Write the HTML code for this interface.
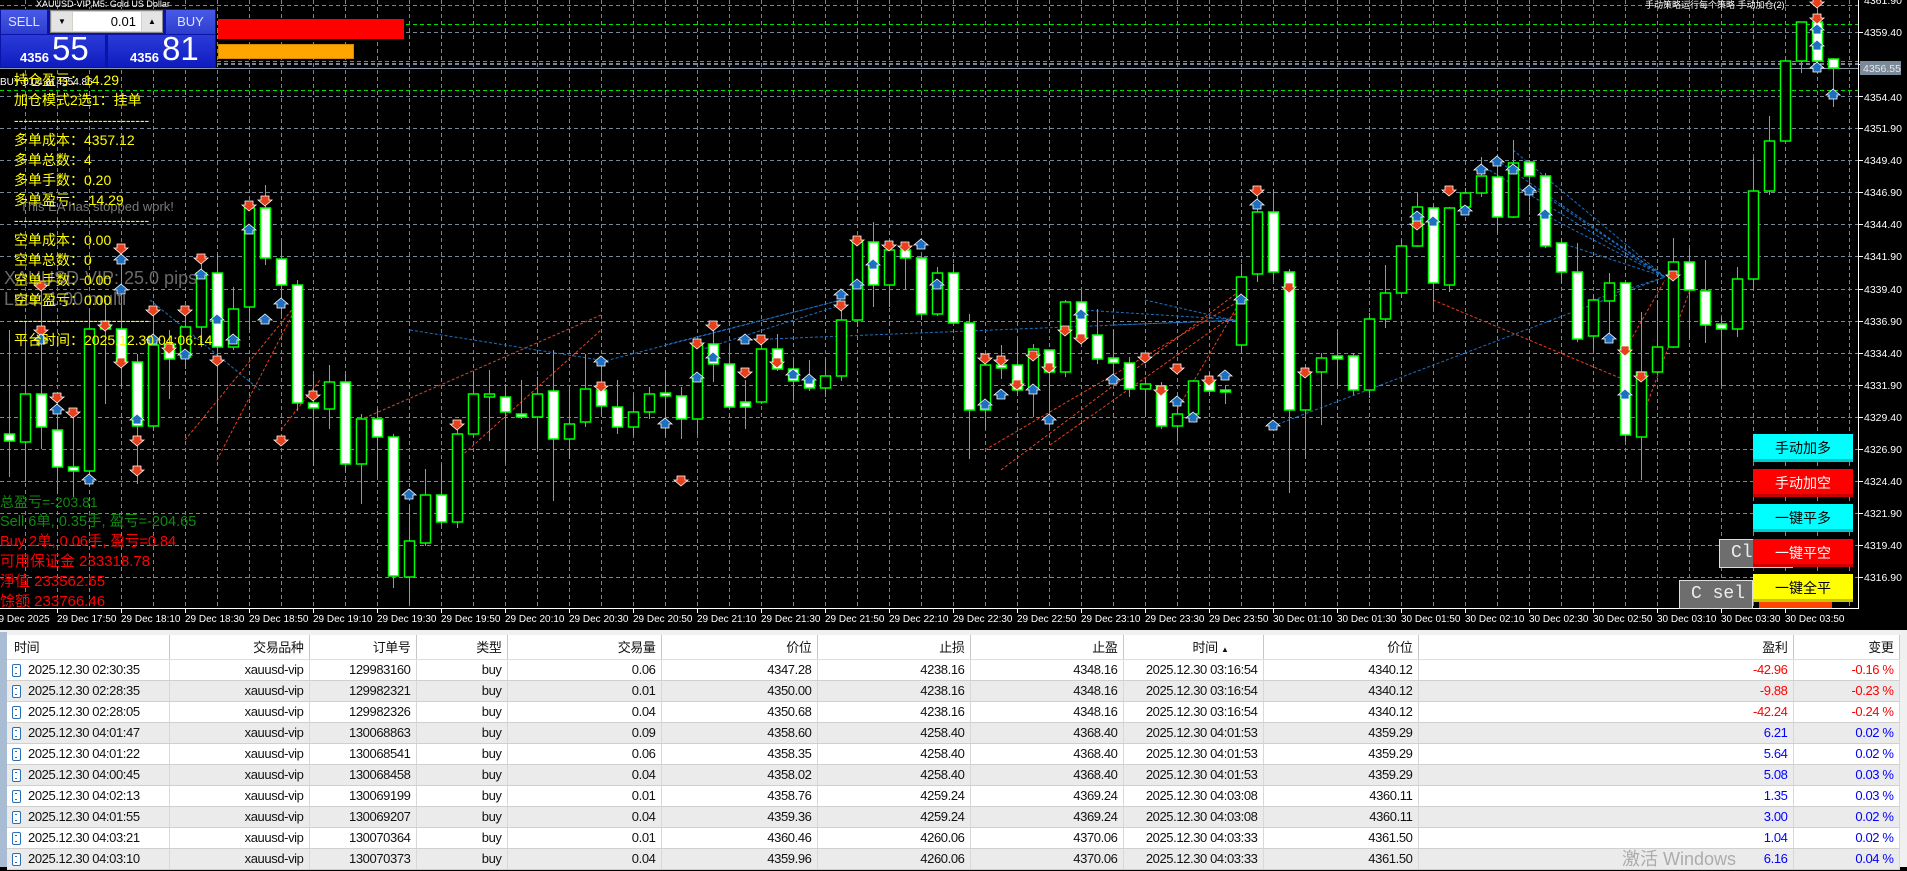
<!DOCTYPE html>
<html><head><meta charset="utf-8"><style>
*{margin:0;padding:0;box-sizing:border-box}
body{width:1907px;height:867px;overflow:hidden;background:#000;position:relative;font-family:"Liberation Sans","Noto Sans CJK SC",sans-serif}
.a{position:absolute;white-space:nowrap}
.y{color:#ff0;font-size:14px;left:14px;line-height:16px}
.btn{position:absolute;left:1753px;width:100px;height:28px;font-size:14px;text-align:center;line-height:28px;font-family:"Liberation Sans","Noto Sans CJK SC",sans-serif}
table{position:absolute;left:7px;top:635px;border-collapse:collapse;table-layout:fixed;width:1892px;font-size:13px;letter-spacing:-0.4px;color:#111}
th{height:24px;font-weight:normal;text-align:right;padding:0 5px;border-right:1px solid #c8c8c8;border-bottom:1px solid #ddd;background:#fff}
td{height:21px;text-align:right;padding:0 5px;border-right:1px solid #d8d8d8;border-bottom:1px solid #d0d0d0;white-space:nowrap;overflow:hidden;background:#fff}
tr.g td{background:#ebebeb}
td:first-child,th:first-child{text-align:left}
.ic{display:inline-block;width:9px;height:13px;border:1.5px solid #2a6fb5;border-radius:2px;vertical-align:-3px;margin:0 7px 0 0;position:relative;background:#fff}
.ic:after{content:"";position:absolute;left:2px;top:2px;width:2px;height:5px;border-top:1px solid #2a6fb5;border-bottom:1px solid #2a6fb5}
.r{color:#f00}.b{color:#00f}
</style></head><body>
<svg class="a" style="left:0;top:0" width="1907" height="632" xmlns="http://www.w3.org/2000/svg">
<rect width="1907" height="632" fill="#000"/>
<g stroke="#778899" stroke-width="1" stroke-dasharray="4,3">
<path d="M25.5 0V608M57.5 0V608M89.5 0V608M121.5 0V608M153.5 0V608M185.5 0V608M217.5 0V608M249.5 0V608M281.5 0V608M313.5 0V608M345.5 0V608M377.5 0V608M409.5 0V608M441.5 0V608M473.5 0V608M505.5 0V608M537.5 0V608M569.5 0V608M601.5 0V608M633.5 0V608M665.5 0V608M697.5 0V608M729.5 0V608M761.5 0V608M793.5 0V608M825.5 0V608M857.5 0V608M889.5 0V608M921.5 0V608M953.5 0V608M985.5 0V608M1017.5 0V608M1049.5 0V608M1081.5 0V608M1113.5 0V608M1145.5 0V608M1177.5 0V608M1209.5 0V608M1241.5 0V608M1273.5 0V608M1305.5 0V608M1337.5 0V608M1369.5 0V608M1401.5 0V608M1433.5 0V608M1465.5 0V608M1497.5 0V608M1529.5 0V608M1561.5 0V608M1593.5 0V608M1625.5 0V608M1657.5 0V608M1689.5 0V608M1721.5 0V608M1753.5 0V608M1785.5 0V608M1817.5 0V608M1849.5 0V608"/>
<path d="M0 32.5H1858M0 64.5H1858M0 96.5H1858M0 128.5H1858M0 160.5H1858M0 192.5H1858M0 224.5H1858M0 256.5H1858M0 289.5H1858M0 321.5H1858M0 353.5H1858M0 385.5H1858M0 417.5H1858M0 449.5H1858M0 481.5H1858M0 513.5H1858M0 545.5H1858M0 577.5H1858"/>
</g>
<g stroke="#00e000" stroke-width="1" stroke-dasharray="4,3">
<path d="M0 5.5H1858M0 24.5H1858M0 61.5H1858M0 63.5H1858M0 90.5H1858"/>
</g>
<path d="M0 68.5H1858" stroke="#8899aa" stroke-width="1"/>
<g fill="none" stroke-width="1" stroke-dasharray="3,2">
<g stroke="#1e6fc0">
<path d="M1481 165L1665 277M1497 160L1665 277M1513 150L1665 277M1529 185L1665 277M1545 215L1665 277M1561 243L1665 277M1593 300L1665 277M1273 426L1665 277"/>
<path d="M665 345L841 300M700 350L841 305M601 362L841 300M745 340L1241 320M1081 310L1241 320M1113 325L1241 320M1145 300L1241 322M410 330L600 360M150 300L260 390"/>
</g>
<g stroke="#e8401c">
<path d="M985 450L1241 300M1001 470L1241 290M1050 445L1241 310M1177 410L1241 300M360 420L601 315M457 460L601 330M281 430L320 380M185 440L300 300M217 460L300 300M1433 300L1625 380M1625 350L1665 280M1641 420L1690 290"/>
</g>
</g>
<g stroke="#00ff00" stroke-width="1">
<path d="M9.5 330V477M25.5 322V482M41.5 287V449M57.5 396V494M73.5 412V497M89.5 310V486M105.5 300V404M121.5 247V387M137.5 354V484M153.5 310V431M169.5 330V399M185.5 307V369M201.5 257V347M217.5 254V421M233.5 287V350M249.5 203V330M265.5 185V265M281.5 240V315M297.5 280V411M313.5 374V466M329.5 365V429M345.5 374V471M361.5 414V504M377.5 409V477M393.5 434V588M409.5 506V604M425.5 469V546M441.5 464V526M457.5 421V528M473.5 372V437M489.5 370V441M505.5 384V462M521.5 380V419M537.5 377V451M553.5 350V501M569.5 387V459M585.5 354V427M601.5 367V417M617.5 380V434M633.5 396V436M649.5 387V419M665.5 370V437M681.5 387V439M697.5 340V434M713.5 327V382M729.5 347V409M745.5 380V429M761.5 339V404M777.5 334V371M793.5 360V399M809.5 360V391M825.5 359V397M841.5 304V381M857.5 237V327M873.5 222V307M889.5 244V307M905.5 244V290M921.5 256V320M937.5 267V316M953.5 264V324M969.5 314V459M985.5 364V429M1001.5 345V379M1017.5 339V396M1033.5 344V417M1049.5 350V427M1065.5 300V377M1081.5 290V339M1097.5 309V364M1113.5 330V381M1129.5 357V397M1145.5 380V417M1161.5 382V429M1177.5 401V441M1193.5 380V416M1209.5 372V394M1225.5 386V404M1241.5 264V354M1257.5 187V282M1273.5 190V280M1289.5 269V493M1305.5 365V458M1321.5 353V425M1337.5 332V387M1353.5 353V395M1369.5 313V398M1385.5 265V328M1401.5 240V298M1417.5 192V247M1433.5 205V308M1449.5 207V292M1465.5 188V213M1481.5 157V197M1497.5 155V233M1513.5 140V218M1529.5 160V215M1545.5 173V248M1561.5 238V283M1577.5 243V342M1593.5 295V350M1609.5 273V339M1625.5 282V442M1641.5 312V480M1657.5 300V373M1673.5 238V348M1689.5 248V338M1705.5 260V343M1721.5 317V385M1737.5 267V337M1753.5 158V290M1769.5 116V195M1785.5 60V142M1801.5 22V73M1817.5 2V65M1833.5 58V107"/>
</g>
<g stroke="#00ff00" stroke-width="1.5">
<g fill="#fff">
<rect x="4.5" y="434" width="10" height="7"/><rect x="36.5" y="394" width="10" height="33"/><rect x="52.5" y="430" width="10" height="37"/><rect x="68.5" y="467" width="10" height="4"/><rect x="100.5" y="325" width="10" height="4"/><rect x="116.5" y="329" width="10" height="33"/><rect x="132.5" y="362" width="10" height="64"/><rect x="164.5" y="344" width="10" height="15"/><rect x="212.5" y="273" width="10" height="74"/><rect x="260.5" y="208" width="10" height="50"/><rect x="276.5" y="259" width="10" height="26"/><rect x="292.5" y="285" width="10" height="118"/><rect x="308.5" y="403" width="10" height="5"/><rect x="340.5" y="382" width="10" height="82"/><rect x="372.5" y="419" width="10" height="18"/><rect x="388.5" y="437" width="10" height="139"/><rect x="436.5" y="495" width="10" height="27"/><rect x="500.5" y="397" width="10" height="15"/><rect x="516.5" y="414" width="10" height="3"/><rect x="548.5" y="391" width="10" height="48"/><rect x="596.5" y="390" width="10" height="16"/><rect x="612.5" y="407" width="10" height="20"/><rect x="660.5" y="393" width="10" height="3"/><rect x="676.5" y="396" width="10" height="23"/><rect x="708.5" y="344" width="10" height="20"/><rect x="724.5" y="364" width="10" height="43"/><rect x="740.5" y="402" width="10" height="5"/><rect x="772.5" y="349" width="10" height="20"/><rect x="788.5" y="369" width="10" height="12"/><rect x="804.5" y="380" width="10" height="8"/><rect x="868.5" y="242" width="10" height="43"/><rect x="900.5" y="250" width="10" height="8"/><rect x="916.5" y="258" width="10" height="56"/><rect x="948.5" y="273" width="10" height="50"/><rect x="964.5" y="323" width="10" height="87"/><rect x="996.5" y="365" width="10" height="3"/><rect x="1012.5" y="365" width="10" height="25"/><rect x="1044.5" y="350" width="10" height="22"/><rect x="1076.5" y="302" width="10" height="35"/><rect x="1092.5" y="335" width="10" height="24"/><rect x="1108.5" y="358" width="10" height="5"/><rect x="1124.5" y="363" width="10" height="26"/><rect x="1156.5" y="386" width="10" height="40"/><rect x="1204.5" y="381" width="10" height="10"/><rect x="1220.5" y="390" width="10" height="2"/><rect x="1268.5" y="212" width="10" height="60"/><rect x="1284.5" y="272" width="10" height="138"/><rect x="1332.5" y="356" width="10" height="3"/><rect x="1348.5" y="356" width="10" height="34"/><rect x="1428.5" y="208" width="10" height="75"/><rect x="1492.5" y="177" width="10" height="40"/><rect x="1524.5" y="162" width="10" height="14"/><rect x="1540.5" y="176" width="10" height="70"/><rect x="1556.5" y="243" width="10" height="29"/><rect x="1572.5" y="272" width="10" height="67"/><rect x="1620.5" y="283" width="10" height="152"/><rect x="1684.5" y="262" width="10" height="28"/><rect x="1700.5" y="291" width="10" height="34"/><rect x="1716.5" y="324" width="10" height="5"/><rect x="1812.5" y="22" width="10" height="39"/><rect x="1828.5" y="59" width="10" height="9"/>
</g>
<g fill="#000">
<rect x="20.5" y="394" width="10" height="48"/><rect x="84.5" y="329" width="10" height="142"/><rect x="148.5" y="345" width="10" height="81"/><rect x="180.5" y="327" width="10" height="30"/><rect x="196.5" y="273" width="10" height="54"/><rect x="228.5" y="309" width="10" height="38"/><rect x="244.5" y="208" width="10" height="99"/><rect x="324.5" y="382" width="10" height="27"/><rect x="356.5" y="419" width="10" height="45"/><rect x="404.5" y="541" width="10" height="36"/><rect x="420.5" y="495" width="10" height="48"/><rect x="452.5" y="434" width="10" height="88"/><rect x="468.5" y="394" width="10" height="40"/><rect x="484.5" y="394" width="10" height="3"/><rect x="532.5" y="394" width="10" height="23"/><rect x="564.5" y="424" width="10" height="15"/><rect x="580.5" y="389" width="10" height="33"/><rect x="628.5" y="412" width="10" height="15"/><rect x="644.5" y="394" width="10" height="18"/><rect x="692.5" y="344" width="10" height="75"/><rect x="756.5" y="349" width="10" height="53"/><rect x="820.5" y="376" width="10" height="12"/><rect x="836.5" y="320" width="10" height="56"/><rect x="852.5" y="242" width="10" height="78"/><rect x="884.5" y="250" width="10" height="35"/><rect x="932.5" y="273" width="10" height="41"/><rect x="980.5" y="365" width="10" height="45"/><rect x="1028.5" y="349" width="10" height="39"/><rect x="1060.5" y="302" width="10" height="70"/><rect x="1140.5" y="384" width="10" height="5"/><rect x="1172.5" y="414" width="10" height="12"/><rect x="1188.5" y="381" width="10" height="33"/><rect x="1236.5" y="277" width="10" height="68"/><rect x="1252.5" y="212" width="10" height="62"/><rect x="1300.5" y="372" width="10" height="38"/><rect x="1316.5" y="358" width="10" height="14"/><rect x="1364.5" y="319" width="10" height="71"/><rect x="1380.5" y="293" width="10" height="26"/><rect x="1396.5" y="246" width="10" height="47"/><rect x="1412.5" y="207" width="10" height="39"/><rect x="1444.5" y="208" width="10" height="77"/><rect x="1460.5" y="193" width="10" height="14"/><rect x="1476.5" y="176" width="10" height="17"/><rect x="1508.5" y="163" width="10" height="54"/><rect x="1588.5" y="300" width="10" height="36"/><rect x="1604.5" y="283" width="10" height="18"/><rect x="1636.5" y="372" width="10" height="65"/><rect x="1652.5" y="347" width="10" height="25"/><rect x="1668.5" y="262" width="10" height="85"/><rect x="1732.5" y="279" width="10" height="50"/><rect x="1748.5" y="191" width="10" height="88"/><rect x="1764.5" y="141" width="10" height="50"/><rect x="1780.5" y="61" width="10" height="80"/><rect x="1796.5" y="22" width="10" height="39"/>
</g>
</g>
<g fill="#e8401c" stroke="#fff" stroke-width="0.8">
<path d="M37 281h8v4h3l-7 6-7-6h3z M37 326h8v4h3l-7 6-7-6h3z M53 393h8v4h3l-7 6-7-6h3z M69 408h8v4h3l-7 6-7-6h3z M101 321h8v4h3l-7 6-7-6h3z M117 244h8v4h3l-7 6-7-6h3z M117 358h8v4h3l-7 6-7-6h3z M133 436h8v4h3l-7 6-7-6h3z M133 466h8v4h3l-7 6-7-6h3z M149 306h8v4h3l-7 6-7-6h3z M165 344h8v4h3l-7 6-7-6h3z M181 306h8v4h3l-7 6-7-6h3z M197 254h8v4h3l-7 6-7-6h3z M213 356h8v4h3l-7 6-7-6h3z M245 201h8v4h3l-7 6-7-6h3z M261 196h8v4h3l-7 6-7-6h3z M277 436h8v4h3l-7 6-7-6h3z M309 391h8v4h3l-7 6-7-6h3z M453 420h8v4h3l-7 6-7-6h3z M597 382h8v4h3l-7 6-7-6h3z M677 476h8v4h3l-7 6-7-6h3z M693 339h8v4h3l-7 6-7-6h3z M709 321h8v4h3l-7 6-7-6h3z M741 368h8v4h3l-7 6-7-6h3z M757 335h8v4h3l-7 6-7-6h3z M773 358h8v4h3l-7 6-7-6h3z M837 301h8v4h3l-7 6-7-6h3z M853 236h8v4h3l-7 6-7-6h3z M885 241h8v4h3l-7 6-7-6h3z M901 242h8v4h3l-7 6-7-6h3z M981 354h8v4h3l-7 6-7-6h3z M997 356h8v4h3l-7 6-7-6h3z M1013 380h8v4h3l-7 6-7-6h3z M1029 351h8v4h3l-7 6-7-6h3z M1045 363h8v4h3l-7 6-7-6h3z M1061 326h8v4h3l-7 6-7-6h3z M1077 334h8v4h3l-7 6-7-6h3z M1141 353h8v4h3l-7 6-7-6h3z M1157 386h8v4h3l-7 6-7-6h3z M1173 364h8v4h3l-7 6-7-6h3z M1205 376h8v4h3l-7 6-7-6h3z M1253 186h8v4h3l-7 6-7-6h3z M1285 283h8v4h3l-7 6-7-6h3z M1301 368h8v4h3l-7 6-7-6h3z M1413 220h8v4h3l-7 6-7-6h3z M1445 186h8v4h3l-7 6-7-6h3z M1621 346h8v4h3l-7 6-7-6h3z M1637 372h8v4h3l-7 6-7-6h3z M1669 271h8v4h3l-7 6-7-6h3z M1813 -2h8v4h3l-7 6-7-6h3z M1813 14h8v4h3l-7 6-7-6h3z"/>
</g>
<g fill="#1e6fc0" stroke="#fff" stroke-width="0.8">
<path d="M41 334l7 6h-3v4h-8v-4h-3z M57 404l7 6h-3v4h-8v-4h-3z M89 474l7 6h-3v4h-8v-4h-3z M121 254l7 6h-3v4h-8v-4h-3z M121 284l7 6h-3v4h-8v-4h-3z M137 414l7 6h-3v4h-8v-4h-3z M153 334l7 6h-3v4h-8v-4h-3z M185 349l7 6h-3v4h-8v-4h-3z M201 269l7 6h-3v4h-8v-4h-3z M217 314l7 6h-3v4h-8v-4h-3z M233 334l7 6h-3v4h-8v-4h-3z M249 224l7 6h-3v4h-8v-4h-3z M265 314l7 6h-3v4h-8v-4h-3z M281 298l7 6h-3v4h-8v-4h-3z M409 489l7 6h-3v4h-8v-4h-3z M601 356l7 6h-3v4h-8v-4h-3z M665 418l7 6h-3v4h-8v-4h-3z M697 372l7 6h-3v4h-8v-4h-3z M713 352l7 6h-3v4h-8v-4h-3z M745 334l7 6h-3v4h-8v-4h-3z M793 369l7 6h-3v4h-8v-4h-3z M809 374l7 6h-3v4h-8v-4h-3z M841 289l7 6h-3v4h-8v-4h-3z M857 279l7 6h-3v4h-8v-4h-3z M873 259l7 6h-3v4h-8v-4h-3z M921 239l7 6h-3v4h-8v-4h-3z M937 279l7 6h-3v4h-8v-4h-3z M985 399l7 6h-3v4h-8v-4h-3z M1001 389l7 6h-3v4h-8v-4h-3z M1033 384l7 6h-3v4h-8v-4h-3z M1049 414l7 6h-3v4h-8v-4h-3z M1081 309l7 6h-3v4h-8v-4h-3z M1113 374l7 6h-3v4h-8v-4h-3z M1177 396l7 6h-3v4h-8v-4h-3z M1193 412l7 6h-3v4h-8v-4h-3z M1225 370l7 6h-3v4h-8v-4h-3z M1241 294l7 6h-3v4h-8v-4h-3z M1257 199l7 6h-3v4h-8v-4h-3z M1273 420l7 6h-3v4h-8v-4h-3z M1417 211l7 6h-3v4h-8v-4h-3z M1433 216l7 6h-3v4h-8v-4h-3z M1465 205l7 6h-3v4h-8v-4h-3z M1481 164l7 6h-3v4h-8v-4h-3z M1497 156l7 6h-3v4h-8v-4h-3z M1513 164l7 6h-3v4h-8v-4h-3z M1529 185l7 6h-3v4h-8v-4h-3z M1545 209l7 6h-3v4h-8v-4h-3z M1609 333l7 6h-3v4h-8v-4h-3z M1625 389l7 6h-3v4h-8v-4h-3z M1833 89l7 6h-3v4h-8v-4h-3z M1817 24l7 6h-3v4h-8v-4h-3z M1817 40l7 6h-3v4h-8v-4h-3z M1817 62l7 6h-3v4h-8v-4h-3z"/>
</g>
<path d="M0 608.5H1858.5V0" fill="none" stroke="#fff" stroke-width="1"/>
<g stroke="#fff"><path d="M57.5 608V613M121.5 608V613M185.5 608V613M249.5 608V613M313.5 608V613M377.5 608V613M441.5 608V613M505.5 608V613M569.5 608V613M633.5 608V613M697.5 608V613M761.5 608V613M825.5 608V613M889.5 608V613M953.5 608V613M1017.5 608V613M1081.5 608V613M1145.5 608V613M1209.5 608V613M1273.5 608V613M1337.5 608V613M1401.5 608V613M1465.5 608V613M1529.5 608V613M1593.5 608V613M1657.5 608V613M1721.5 608V613M1785.5 608V613"/>
<path d="M1858 32.5h5M1858 64.5h5M1858 96.5h5M1858 128.5h5M1858 160.5h5M1858 192.5h5M1858 224.5h5M1858 256.5h5M1858 289.5h5M1858 321.5h5M1858 353.5h5M1858 385.5h5M1858 417.5h5M1858 449.5h5M1858 481.5h5M1858 513.5h5M1858 545.5h5M1858 577.5h5"/></g>
<g fill="#fff" font-family="Liberation Sans, sans-serif" font-size="10.5">
<text x="1864" y="4">4361.90</text><text x="1864" y="36">4359.40</text><text x="1864" y="101">4354.40</text><text x="1864" y="132">4351.90</text><text x="1864" y="164">4349.40</text><text x="1864" y="196">4346.90</text><text x="1864" y="228">4344.40</text><text x="1864" y="260">4341.90</text><text x="1864" y="293">4339.40</text><text x="1864" y="325">4336.90</text><text x="1864" y="357">4334.40</text><text x="1864" y="389">4331.90</text><text x="1864" y="421">4329.40</text><text x="1864" y="453">4326.90</text><text x="1864" y="485">4324.40</text><text x="1864" y="517">4321.90</text><text x="1864" y="549">4319.40</text><text x="1864" y="581">4316.90</text>
</g>
<rect x="1860" y="61" width="41" height="14" fill="#7b8a9a"/>
<text x="1863" y="72" fill="#e8e8e8" font-family="Liberation Sans, sans-serif" font-size="10.5">4356.55</text>
<g fill="#fff" font-family="Liberation Sans, sans-serif" font-size="10">
<text x="-7" y="622">29 Dec 2025</text><text x="57" y="622">29 Dec 17:50</text><text x="121" y="622">29 Dec 18:10</text><text x="185" y="622">29 Dec 18:30</text><text x="249" y="622">29 Dec 18:50</text><text x="313" y="622">29 Dec 19:10</text><text x="377" y="622">29 Dec 19:30</text><text x="441" y="622">29 Dec 19:50</text><text x="505" y="622">29 Dec 20:10</text><text x="569" y="622">29 Dec 20:30</text><text x="633" y="622">29 Dec 20:50</text><text x="697" y="622">29 Dec 21:10</text><text x="761" y="622">29 Dec 21:30</text><text x="825" y="622">29 Dec 21:50</text><text x="889" y="622">29 Dec 22:10</text><text x="953" y="622">29 Dec 22:30</text><text x="1017" y="622">29 Dec 22:50</text><text x="1081" y="622">29 Dec 23:10</text><text x="1145" y="622">29 Dec 23:30</text><text x="1209" y="622">29 Dec 23:50</text><text x="1273" y="622">30 Dec 01:10</text><text x="1337" y="622">30 Dec 01:30</text><text x="1401" y="622">30 Dec 01:50</text><text x="1465" y="622">30 Dec 02:10</text><text x="1529" y="622">30 Dec 02:30</text><text x="1593" y="622">30 Dec 02:50</text><text x="1657" y="622">30 Dec 03:10</text><text x="1721" y="622">30 Dec 03:30</text><text x="1785" y="622">30 Dec 03:50</text>
</g>
<text x="1645" y="8" fill="#fff" font-family="Liberation Sans, Noto Sans CJK SC, sans-serif" font-size="9">手动策略运行每个策略 手动加仓(2)</text>
<text x="36" y="7" fill="#fff" font-family="Liberation Sans, sans-serif" font-size="9">XAUUSD-VIP,M5:  Gold US Dollar</text>
</svg>

<div class="a" style="left:4px;top:268px;font-size:18px;color:#6a6a6a">XAUUSD-VIP: 25.0 pips</div>
<div class="a" style="left:4px;top:289px;font-size:18px;color:#6a6a6a">Lots: 1.00 multi</div>
<div class="a" style="left:20px;top:199px;font-size:13px;color:#7a7a7a">This EA has stopped work!</div>
<div class="a" style="left:0;top:77px;font-size:10px;color:#fff">BUY 0.04 at 4354.86</div>

<div class="a y" style="top:72px">持仓盈亏：14.29</div>
<div class="a y" style="top:92px">加仓模式2选1：挂单</div>
<div class="a y" style="top:112px">-----------------------------</div>
<div class="a y" style="top:132px">多单成本：4357.12</div>
<div class="a y" style="top:152px">多单总数：4</div>
<div class="a y" style="top:172px">多单手数：0.20</div>
<div class="a y" style="top:192px">多单盈亏：-14.29</div>
<div class="a y" style="top:212px">-----------------------------</div>
<div class="a y" style="top:232px">空单成本：0.00</div>
<div class="a y" style="top:252px">空单总数：0</div>
<div class="a y" style="top:272px">空单手数：0.00</div>
<div class="a y" style="top:292px">空单盈亏：0.00</div>
<div class="a y" style="top:312px">-----------------------------</div>
<div class="a y" style="top:332px">平台时间：2025.12.30 04:06:14</div>

<div class="a" style="left:0;top:494px;font-size:14px;color:#0f8a0f;line-height:16px">总盈亏=-203.81</div>
<div class="a" style="left:0;top:514px;font-size:14.5px;color:#0f8a0f;line-height:16px">Sell 6单, 0.35手, 盈亏=-204.65</div>
<div class="a" style="left:0;top:534px;font-size:14.5px;color:#f00;line-height:16px">Buy 2单, 0.06手, 盈亏=0.84</div>
<div class="a" style="left:0;top:553px;font-size:15px;color:#f00;line-height:18px">可用保证金 233318.78</div>
<div class="a" style="left:0;top:573px;font-size:15px;color:#f00;line-height:18px">淨值 233562.65</div>
<div class="a" style="left:0;top:593px;font-size:15px;color:#f00;line-height:18px">馀额 233766.46</div>

<div class="a" style="left:0;top:9px;width:216px;height:59px;background:#0b14a8"></div>
<div class="a" style="left:1px;top:10px;width:46px;height:24px;background:linear-gradient(#4a5ae8,#2c3ccc);color:#dde4ff;font-size:13px;line-height:24px;text-align:center">SELL</div>
<div class="a" style="left:50px;top:10px;width:113px;height:23px;background:#d4d0c8;border:1px solid #888"></div>
<div class="a" style="left:52px;top:12px;width:20px;height:19px;background:#e4e4e4;font-size:8px;text-align:center;line-height:19px">▼</div>
<div class="a" style="left:73px;top:12px;width:68px;height:19px;background:#fff;font-size:13px;text-align:right;padding-right:5px;line-height:19px">0.01</div>
<div class="a" style="left:142px;top:12px;width:20px;height:19px;background:#e4e4e4;font-size:8px;text-align:center;line-height:19px">▲</div>
<div class="a" style="left:166px;top:10px;width:49px;height:24px;background:linear-gradient(#4a5ae8,#2c3ccc);color:#dde4ff;font-size:13px;line-height:24px;text-align:center">BUY</div>
<div class="a" style="left:1px;top:35px;width:104px;height:32px;background:linear-gradient(#2b3bd8,#0e1cc0)"></div>
<div class="a" style="left:108px;top:35px;width:107px;height:32px;background:linear-gradient(#2b3bd8,#0e1cc0)"></div>
<div class="a" style="left:20px;top:50px;font-size:13px;font-weight:bold;color:#fff">4356</div>
<div class="a" style="left:52px;top:31px;font-size:33px;color:#fff;line-height:36px">55</div>
<div class="a" style="left:130px;top:50px;font-size:13px;font-weight:bold;color:#fff">4356</div>
<div class="a" style="left:162px;top:31px;font-size:33px;color:#fff;line-height:36px">81</div>
<div class="a" style="left:218px;top:19px;width:186px;height:20px;background:#f00"></div>
<div class="a" style="left:218px;top:44px;width:136px;height:15px;background:#ffa500;border:1px solid #d88a00"></div>

<div class="a" style="left:1759px;top:590px;width:73px;height:18px;background:#ff4500"></div>
<div class="a" style="left:1719px;top:539px;width:74px;height:29px;background:#6e6e6e;border:1px solid #ddd;color:#eee;font-family:'Liberation Mono',monospace;font-size:18px;line-height:27px;padding-left:11px">Cl</div>
<div class="a" style="left:1679px;top:580px;width:74px;height:29px;background:#6e6e6e;border:1px solid #ddd;color:#eee;font-family:'Liberation Mono',monospace;font-size:18px;line-height:27px;padding-left:11px">C sel</div>
<div class="btn" style="top:434px;background:#0ff;border-bottom:3px solid #00c8c8;color:#000">手动加多</div>
<div class="btn" style="top:469px;background:#f00;border-bottom:3px solid #c80000;color:#fff">手动加空</div>
<div class="btn" style="top:504px;background:#0ff;border-bottom:3px solid #00c8c8;color:#000">一键平多</div>
<div class="btn" style="top:539px;background:#f00;border-bottom:3px solid #c80000;color:#fff">一键平空</div>
<div class="btn" style="top:574px;background:#ff0;border-bottom:3px solid #c8c800;color:#000">一键全平</div>

<div class="a" style="left:0;top:630px;width:1907px;height:237px;background:#f0f0f0"></div>
<div class="a" style="left:0;top:632px;width:7px;height:235px;background:#a8bcd4"></div>
<table>
<colgroup><col style="width:162px"><col style="width:140px"><col style="width:107px"><col style="width:91px"><col style="width:154px"><col style="width:156px"><col style="width:153px"><col style="width:153px"><col style="width:140px"><col style="width:155px"><col style="width:375px"><col style="width:106px"></colgroup>
<tr><th style="padding-left:7px">时间</th><th>交易品种</th><th>订单号</th><th>类型</th><th>交易量</th><th>价位</th><th>止损</th><th>止盈</th><th style="text-align:center;padding-left:40px">时间 <span style="font-size:8px">▲</span></th><th>价位</th><th>盈利</th><th>变更</th></tr>
<tr><td><span class="ic"></span>2025.12.30 02:30:35</td><td>xauusd-vip</td><td>129983160</td><td>buy</td><td>0.06</td><td>4347.28</td><td>4238.16</td><td>4348.16</td><td>2025.12.30 03:16:54</td><td>4340.12</td><td class="r">-42.96</td><td class="r">-0.16 %</td></tr>
<tr class="g"><td><span class="ic"></span>2025.12.30 02:28:35</td><td>xauusd-vip</td><td>129982321</td><td>buy</td><td>0.01</td><td>4350.00</td><td>4238.16</td><td>4348.16</td><td>2025.12.30 03:16:54</td><td>4340.12</td><td class="r">-9.88</td><td class="r">-0.23 %</td></tr>
<tr><td><span class="ic"></span>2025.12.30 02:28:05</td><td>xauusd-vip</td><td>129982326</td><td>buy</td><td>0.04</td><td>4350.68</td><td>4238.16</td><td>4348.16</td><td>2025.12.30 03:16:54</td><td>4340.12</td><td class="r">-42.24</td><td class="r">-0.24 %</td></tr>
<tr class="g"><td><span class="ic"></span>2025.12.30 04:01:47</td><td>xauusd-vip</td><td>130068863</td><td>buy</td><td>0.09</td><td>4358.60</td><td>4258.40</td><td>4368.40</td><td>2025.12.30 04:01:53</td><td>4359.29</td><td class="b">6.21</td><td class="b">0.02 %</td></tr>
<tr><td><span class="ic"></span>2025.12.30 04:01:22</td><td>xauusd-vip</td><td>130068541</td><td>buy</td><td>0.06</td><td>4358.35</td><td>4258.40</td><td>4368.40</td><td>2025.12.30 04:01:53</td><td>4359.29</td><td class="b">5.64</td><td class="b">0.02 %</td></tr>
<tr class="g"><td><span class="ic"></span>2025.12.30 04:00:45</td><td>xauusd-vip</td><td>130068458</td><td>buy</td><td>0.04</td><td>4358.02</td><td>4258.40</td><td>4368.40</td><td>2025.12.30 04:01:53</td><td>4359.29</td><td class="b">5.08</td><td class="b">0.03 %</td></tr>
<tr><td><span class="ic"></span>2025.12.30 04:02:13</td><td>xauusd-vip</td><td>130069199</td><td>buy</td><td>0.01</td><td>4358.76</td><td>4259.24</td><td>4369.24</td><td>2025.12.30 04:03:08</td><td>4360.11</td><td class="b">1.35</td><td class="b">0.03 %</td></tr>
<tr class="g"><td><span class="ic"></span>2025.12.30 04:01:55</td><td>xauusd-vip</td><td>130069207</td><td>buy</td><td>0.04</td><td>4359.36</td><td>4259.24</td><td>4369.24</td><td>2025.12.30 04:03:08</td><td>4360.11</td><td class="b">3.00</td><td class="b">0.02 %</td></tr>
<tr><td><span class="ic"></span>2025.12.30 04:03:21</td><td>xauusd-vip</td><td>130070364</td><td>buy</td><td>0.01</td><td>4360.46</td><td>4260.06</td><td>4370.06</td><td>2025.12.30 04:03:33</td><td>4361.50</td><td class="b">1.04</td><td class="b">0.02 %</td></tr>
<tr class="g"><td><span class="ic"></span>2025.12.30 04:03:10</td><td>xauusd-vip</td><td>130070373</td><td>buy</td><td>0.04</td><td>4359.96</td><td>4260.06</td><td>4370.06</td><td>2025.12.30 04:03:33</td><td>4361.50</td><td class="b">6.16</td><td class="b">0.04 %</td></tr>
</table>
<div class="a" style="left:1622px;top:845px;font-size:18px;color:rgba(120,120,120,0.55)">激活 Windows</div>
</body></html>
